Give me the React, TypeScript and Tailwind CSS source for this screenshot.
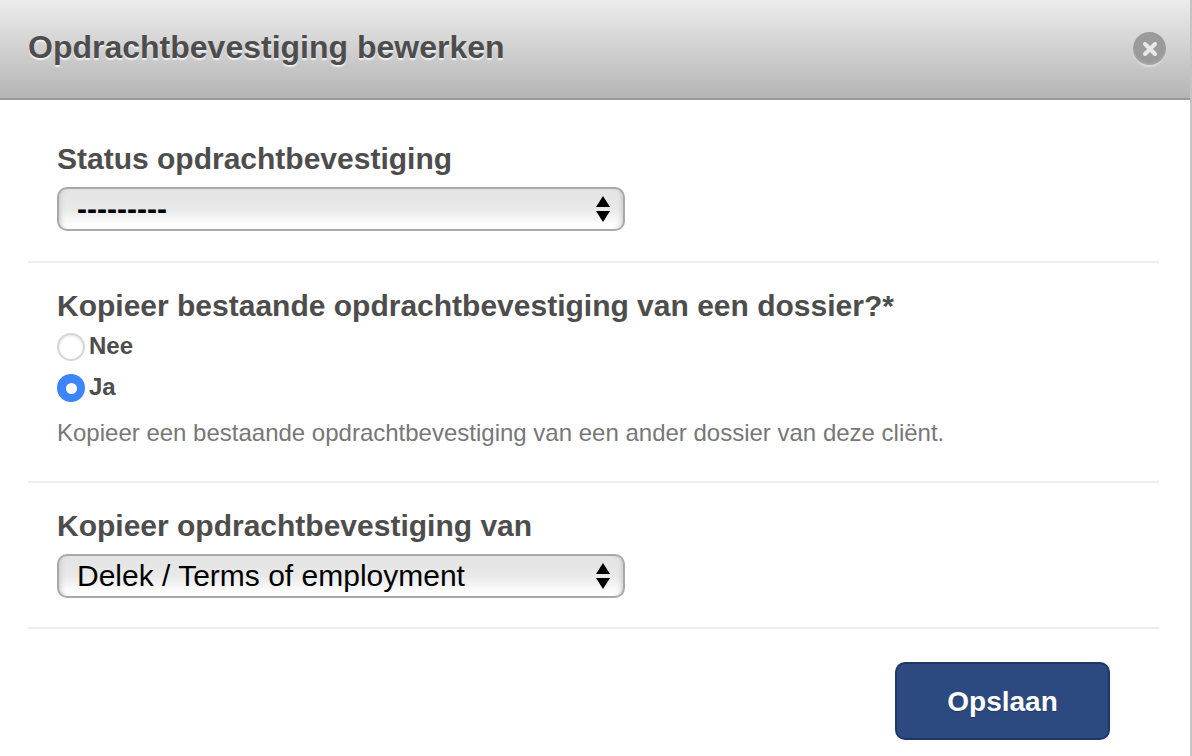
const font = { fontFamily: '"Liberation Sans", Arial, sans-serif' };

const SelectBox = ({ value, textClass }: { value: string; textClass: string }) => (
  <div className="relative w-[568px] h-[44px]">
    <select
      defaultValue={value}
      style={font}
      className={`appearance-none block w-full h-full rounded-[10px] border-2 border-[#a9a9a9] pl-[18px] pr-10 text-black outline-none bg-[linear-gradient(to_bottom,#e4e4e4_0%,#e9e9e9_50%,#fbfbfb_85%,#ffffff_100%)] shadow-[inset_5px_0_5px_-4px_#c4c4c4,inset_-5px_0_5px_-4px_#c4c4c4] ${textClass}`}
    >
      <option>{value}</option>
    </select>
    <svg
      className="absolute right-[15px] top-[9px] pointer-events-none"
      width="14"
      height="26"
      viewBox="0 0 14 26"
    >
      <path d="M7 0 L14 11 H0 Z" fill="#000" />
      <path d="M0 15 H14 L7 26 Z" fill="#000" />
    </svg>
  </div>
);

const Radio = ({ checked, label }: { checked?: boolean; label: string }) => (
  <label className="flex items-center h-[28px]">
    {checked ? (
      <span className="flex items-center justify-center w-[28px] h-[28px] rounded-full bg-[#3c85fb]">
        <span className="w-[11px] h-[11px] rounded-full bg-white" />
      </span>
    ) : (
      <span className="w-[28px] h-[28px] rounded-full border-2 border-[#d6d6d6] bg-white shadow-[inset_0_1px_3px_#e4e4e4]" />
    )}
    <span className="ml-[4px] -mt-[3px] text-[24px] font-bold text-[#4d4d4d]">{label}</span>
  </label>
);

export default function App() {
  return (
    <div style={font} className="w-[1192px] h-[756px] overflow-hidden bg-white border-r-2 border-[#c4c4c4]">
      <div className="relative h-[100px] flex items-center pl-[28px] pb-[5px] border-b-2 border-[#999999] bg-[linear-gradient(to_bottom,#ececec,#b5b5b5)]">
        <h1 className="text-[32px] font-bold text-[#4d4d4d] [text-shadow:0_2px_1px_#f0f0f0]">
          Opdrachtbevestiging bewerken
        </h1>
        <div className="absolute left-[1133px] top-[32px] w-[33px] h-[33px] rounded-full flex items-center justify-center bg-[radial-gradient(circle_at_50%_45%,#9d9d9d,#9a9a9a_60%,#c8c8c8_100%)] shadow-[0_3px_2px_-1px_#dedede]">
          <svg width="16" height="16" viewBox="0 0 16 16" className="blur-[0.6px]">
            <path d="M3 3 L13 13 M13 3 L3 13" stroke="#e8e8e8" strokeWidth="4" strokeLinecap="round" />
          </svg>
        </div>
      </div>

      <div className="ml-[28px] mr-[31px]">
        <section className="h-[163px] pl-[29px] pt-[41px] border-b-2 border-[#eeeeee]">
          <h2 className="text-[30px] leading-[36px] font-bold text-[#4d4d4d]">Status opdrachtbevestiging</h2>
          <div className="mt-[10px]">
            <SelectBox value="---------" textClass="text-[30px] font-bold leading-[36px]" />
          </div>
        </section>

        <section className="h-[220px] pl-[29px] pt-[25px] border-b-2 border-[#eeeeee]">
          <h2 className="text-[30px] leading-[36px] font-bold text-[#4d4d4d]">
            Kopieer bestaande opdrachtbevestiging van een dossier?*
          </h2>
          <div className="mt-[9px] flex flex-col gap-[13px]">
            <Radio label="Nee" />
            <Radio checked label="Ja" />
          </div>
          <p className="mt-[16px] text-[24px] leading-[30px] text-[#777777]">
            Kopieer een bestaande opdrachtbevestiging van een ander dossier van deze cliënt.
          </p>
        </section>

        <section className="h-[146px] pl-[29px] pt-[25px] border-b-2 border-[#eeeeee]">
          <h2 className="text-[30px] leading-[36px] font-bold text-[#4d4d4d]">Kopieer opdrachtbevestiging van</h2>
          <div className="mt-[10px]">
            <SelectBox value="Delek / Terms of employment" textClass="text-[30px] leading-[36px]" />
          </div>
        </section>

        <div className="flex justify-end pt-[33px] pr-[49px]">
          <button className="w-[215px] h-[78px] pt-[2px] rounded-[10px] border-2 border-[#1e3768] bg-[#2d4a80] text-white text-[28px] font-bold [text-shadow:0_1px_1px_#1e3768]">
            Opslaan
          </button>
        </div>
      </div>
    </div>
  );
}
